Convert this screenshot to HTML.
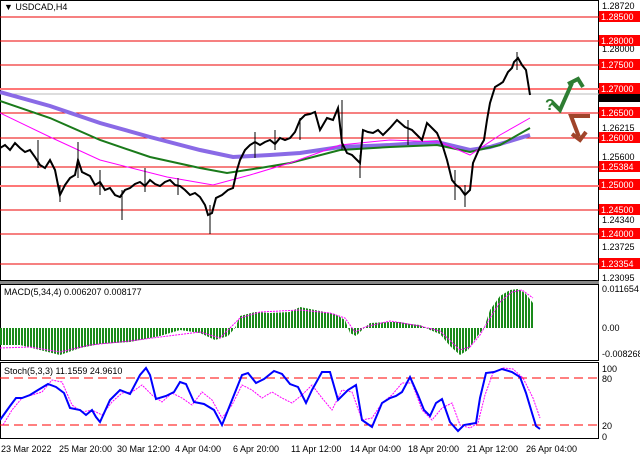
<!DOCTYPE html>
<html><head><style>
body{margin:0;background:#fff;width:640px;height:457px;overflow:hidden;font-family:"Liberation Sans",sans-serif}
svg text{font-family:"Liberation Sans",sans-serif;font-size:9px}
</style></head><body>
<svg width="640" height="457" viewBox="0 0 640 457" xmlns="http://www.w3.org/2000/svg">
<defs>
<pattern id="bars" width="3" height="10" patternUnits="userSpaceOnUse"><rect x="0" y="0" width="2" height="10" fill="#1a8a1a"/></pattern>
</defs>
<rect width="640" height="457" fill="#fff"/>
<rect x="0.5" y="0.5" width="598" height="280" fill="none" stroke="#000"/>
<rect x="0" y="281" width="599" height="3" fill="#888"/>
<rect x="0.5" y="284.5" width="598" height="76" fill="none" stroke="#000"/>
<rect x="0.5" y="362.5" width="598" height="76" fill="none" stroke="#000"/>
<g stroke="#e00" stroke-width="1">
<line x1="0" y1="17" x2="599" y2="17"/><line x1="0" y1="41" x2="599" y2="41"/><line x1="0" y1="65" x2="599" y2="65"/>
<line x1="0" y1="89" x2="599" y2="89" stroke="#f77" stroke-width="2"/><line x1="0" y1="113" x2="599" y2="113"/><line x1="0" y1="138" x2="599" y2="138"/>
<line x1="0" y1="167" x2="599" y2="167"/><line x1="0" y1="186" x2="599" y2="186" stroke="#f77" stroke-width="2"/><line x1="0" y1="210" x2="599" y2="210"/>
<line x1="0" y1="234" x2="599" y2="234"/><line x1="0" y1="264" x2="599" y2="264"/>
</g>
<line x1="0" y1="94" x2="599" y2="94" stroke="#bbb"/>
<!-- MAs -->
<polyline fill="none" stroke="#8a6ae6" stroke-width="4" points="0,92 50,106 100,123 150,137 200,150 233,157 270,155 300,153 340,147 390,145 437,142 470,150 490,147 530,135"/>
<polyline fill="none" stroke="#1a7a1a" stroke-width="2" points="0,101 50,118 100,140 150,157 200,168 227,173 260,168 290,163 340,150 390,147 437,145 470,152 500,145 530,128"/>
<polyline fill="none" stroke="#f0f" stroke-width="1" points="0,113 50,137 100,160 167,177 213,185 250,175 290,163 340,145 390,140 440,142 470,155 500,135 530,118"/>
<!-- price -->
<polyline fill="none" stroke="#000" stroke-width="2" points="0,148 5,145 10,150 15,143 20,148 25,152 30,150 35,157 40,165 45,168 50,160 55,170 60,195 65,185 70,178 75,175 78,160 82,172 90,176 95,185 100,182 105,190 110,188 115,195 120,197 125,190 130,188 135,184 140,182 145,186 150,180 155,184 160,186 165,182 170,180 175,185 180,186 185,190 190,195 195,193 200,197 205,205 208,215 212,213 216,198 222,195 228,190 233,188 237,170 240,160 245,150 250,145 255,142 260,145 265,142 270,140 275,144 280,138 285,140 290,138 295,132 300,120 305,115 310,114 315,112 320,130 327,118 333,120 338,108 342,143 347,153 352,155 357,160 360,163 363,130 368,132 373,133 378,130 383,135 390,128 397,120 405,127 412,130 417,135 422,140 427,123 432,128 437,133 443,147 447,160 452,180 456,185 460,188 465,195 470,190 473,163 480,147 484,140 487,120 490,103 495,87 500,84 503,82 508,72 512,68 514,62 518,58 522,65 526,70 530,95"/>
<g stroke="#000" stroke-width="1">
<line x1="210" y1="205" x2="210" y2="234"/><line x1="122" y1="190" x2="122" y2="220"/><line x1="78" y1="142" x2="78" y2="178"/><line x1="60" y1="185" x2="60" y2="202"/><line x1="342" y1="100" x2="342" y2="150"/><line x1="360" y1="155" x2="360" y2="178"/><line x1="465" y1="185" x2="465" y2="207"/><line x1="517" y1="52" x2="517" y2="70"/><line x1="38" y1="140" x2="38" y2="168"/><line x1="255" y1="132" x2="255" y2="158"/><line x1="275" y1="130" x2="275" y2="150"/><line x1="300" y1="118" x2="300" y2="140"/><line x1="408" y1="120" x2="408" y2="145"/><line x1="455" y1="170" x2="455" y2="200"/><line x1="178" y1="178" x2="178" y2="195"/><line x1="145" y1="168" x2="145" y2="192"/><line x1="100" y1="170" x2="100" y2="195"/>
</g>
<!-- arrows -->
<text x="545" y="110" fill="#2e7d32" style="font-size:16px;font-weight:bold">?</text>
<polyline fill="none" stroke="#2e7d32" stroke-width="4" points="552,102 560,110 572,83"/>
<polyline fill="none" stroke="#2e7d32" stroke-width="4" points="568,84 578,79 583,87"/>
<polyline fill="none" stroke="#a0442a" stroke-width="4" points="590,116 571,116 579,137"/>
<polyline fill="none" stroke="#a0442a" stroke-width="4" points="572,134 580,140 586,132"/>
<text x="4" y="10" fill="#000">▼ USDCAD,H4</text>
<g fill="#000">
<text x="602" y="9">1.28720</text><text x="602" y="52">1.28000</text><text x="602" y="100">1.26621</text><text x="602" y="131">1.26215</text><text x="602" y="160">1.25600</text><text x="602" y="223">1.24340</text><text x="602" y="250">1.23725</text><text x="602" y="281">1.23095</text>
</g>
<g fill="#f00">
<rect x="599" y="11" width="41" height="11"/><rect x="599" y="35" width="41" height="11"/><rect x="599" y="59" width="41" height="11"/><rect x="599" y="83" width="41" height="11"/><rect x="599" y="107" width="41" height="11"/><rect x="599" y="132" width="41" height="11"/><rect x="599" y="161" width="41" height="11"/><rect x="599" y="179" width="41" height="11"/><rect x="599" y="204" width="41" height="11"/><rect x="599" y="228" width="41" height="11"/><rect x="599" y="258" width="41" height="11"/>
</g>
<rect x="599" y="94" width="41" height="8" fill="#000"/>
<g fill="#fff">
<text x="601" y="20">1.28500</text><text x="601" y="44">1.28000</text><text x="601" y="68">1.27500</text><text x="601" y="92">1.27000</text><text x="601" y="116">1.26500</text><text x="601" y="141">1.26000</text><text x="601" y="170">1.25384</text><text x="601" y="188">1.25000</text><text x="601" y="213">1.24500</text><text x="601" y="237">1.24000</text><text x="601" y="267">1.23354</text>
</g>
<!-- MACD -->
<polygon fill="url(#bars)" points="0,328 0,345 20,345 40,350 60,355 80,348 100,344 130,342 160,336 180,330 200,333 215,340 228,336 235,328 240,316 255,312 270,313 290,312 300,307 315,310 335,314 345,320 350,333 356,336 362,330 370,323 390,322 400,322 410,324 420,325 430,330 440,334 450,346 460,355 468,350 476,338 484,328 490,310 500,296 510,290 518,289 525,293 533,303 533,328"/>
<polyline fill="none" stroke="#f0f" stroke-width="1" stroke-dasharray="2,1" points="0,348 30,347 60,352 90,345 130,341 160,337 200,332 220,338 240,318 260,312 300,310 330,313 345,318 355,332 365,327 390,321 420,326 440,331 460,350 470,347 480,335 490,318 500,302 512,292 522,290 533,298"/>
<text x="4" y="295" fill="#000">MACD(5,34,4) 0.006207 0.008177</text>
<text x="602" y="292" fill="#000">0.011654</text><text x="602" y="331" fill="#000">0.00</text><text x="602" y="357" fill="#000">-0.008268</text>
<!-- Stoch -->
<g stroke="#f00" stroke-width="1" stroke-dasharray="9,5"><line x1="0" y1="378" x2="599" y2="378"/><line x1="0" y1="425" x2="599" y2="425"/></g>
<polyline fill="none" stroke="#f0f" stroke-width="1" stroke-dasharray="2,1" points="3,425 12,410 22,398 32,395 42,392 52,380 62,382 72,405 82,412 92,410 102,415 112,402 122,393 132,392 142,385 152,395 162,402 172,393 182,398 192,405 202,392 212,400 222,418 232,405 242,385 252,390 262,398 272,392 282,398 292,403 302,395 312,385 322,398 332,410 342,390 352,392 362,420 372,418 382,403 392,395 402,383 412,383 422,410 432,420 442,408 452,403 460,425 470,428 478,423 485,395 493,373 503,368 513,369 523,378 533,398 540,418"/>
<polyline fill="none" stroke="#00f" stroke-width="2" points="0,420 10,406 16,398 22,398 30,395 38,390 48,384 56,387 64,393 70,408 80,410 86,415 92,410 96,417 100,422 110,400 120,390 130,394 140,375 146,368 150,375 156,399 166,396 174,392 180,382 186,384 194,402 204,404 214,410 222,425 232,400 242,375 248,373 256,383 264,379 274,371 282,374 290,384 298,387 306,403 312,390 322,372 330,372 338,400 348,390 356,385 362,420 372,427 382,403 390,398 396,396 402,392 410,377 418,395 424,410 430,416 436,403 442,399 450,422 458,431 464,425 470,424 476,423 480,398 486,373 494,372 502,369 512,372 520,377 526,393 532,413 536,426 540,429"/>
<text x="4" y="374" fill="#000">Stoch(5,3,3) 11.1559 24.9610</text>
<text x="602" y="372" fill="#000">100</text><text x="602" y="382" fill="#000">80</text><text x="602" y="429" fill="#000">20</text><text x="602" y="440" fill="#000">0</text>
<g fill="#000">
<text x="1" y="452">23 Mar 2022</text><text x="59" y="452">25 Mar 20:00</text><text x="117" y="452">30 Mar 12:00</text><text x="175" y="452">4 Apr 04:00</text><text x="233" y="452">6 Apr 20:00</text><text x="291" y="452">11 Apr 12:00</text><text x="350" y="452">14 Apr 04:00</text><text x="408" y="452">18 Apr 20:00</text><text x="467" y="452">21 Apr 12:00</text><text x="526" y="452">26 Apr 04:00</text>
</g>
</svg>
</body></html>
